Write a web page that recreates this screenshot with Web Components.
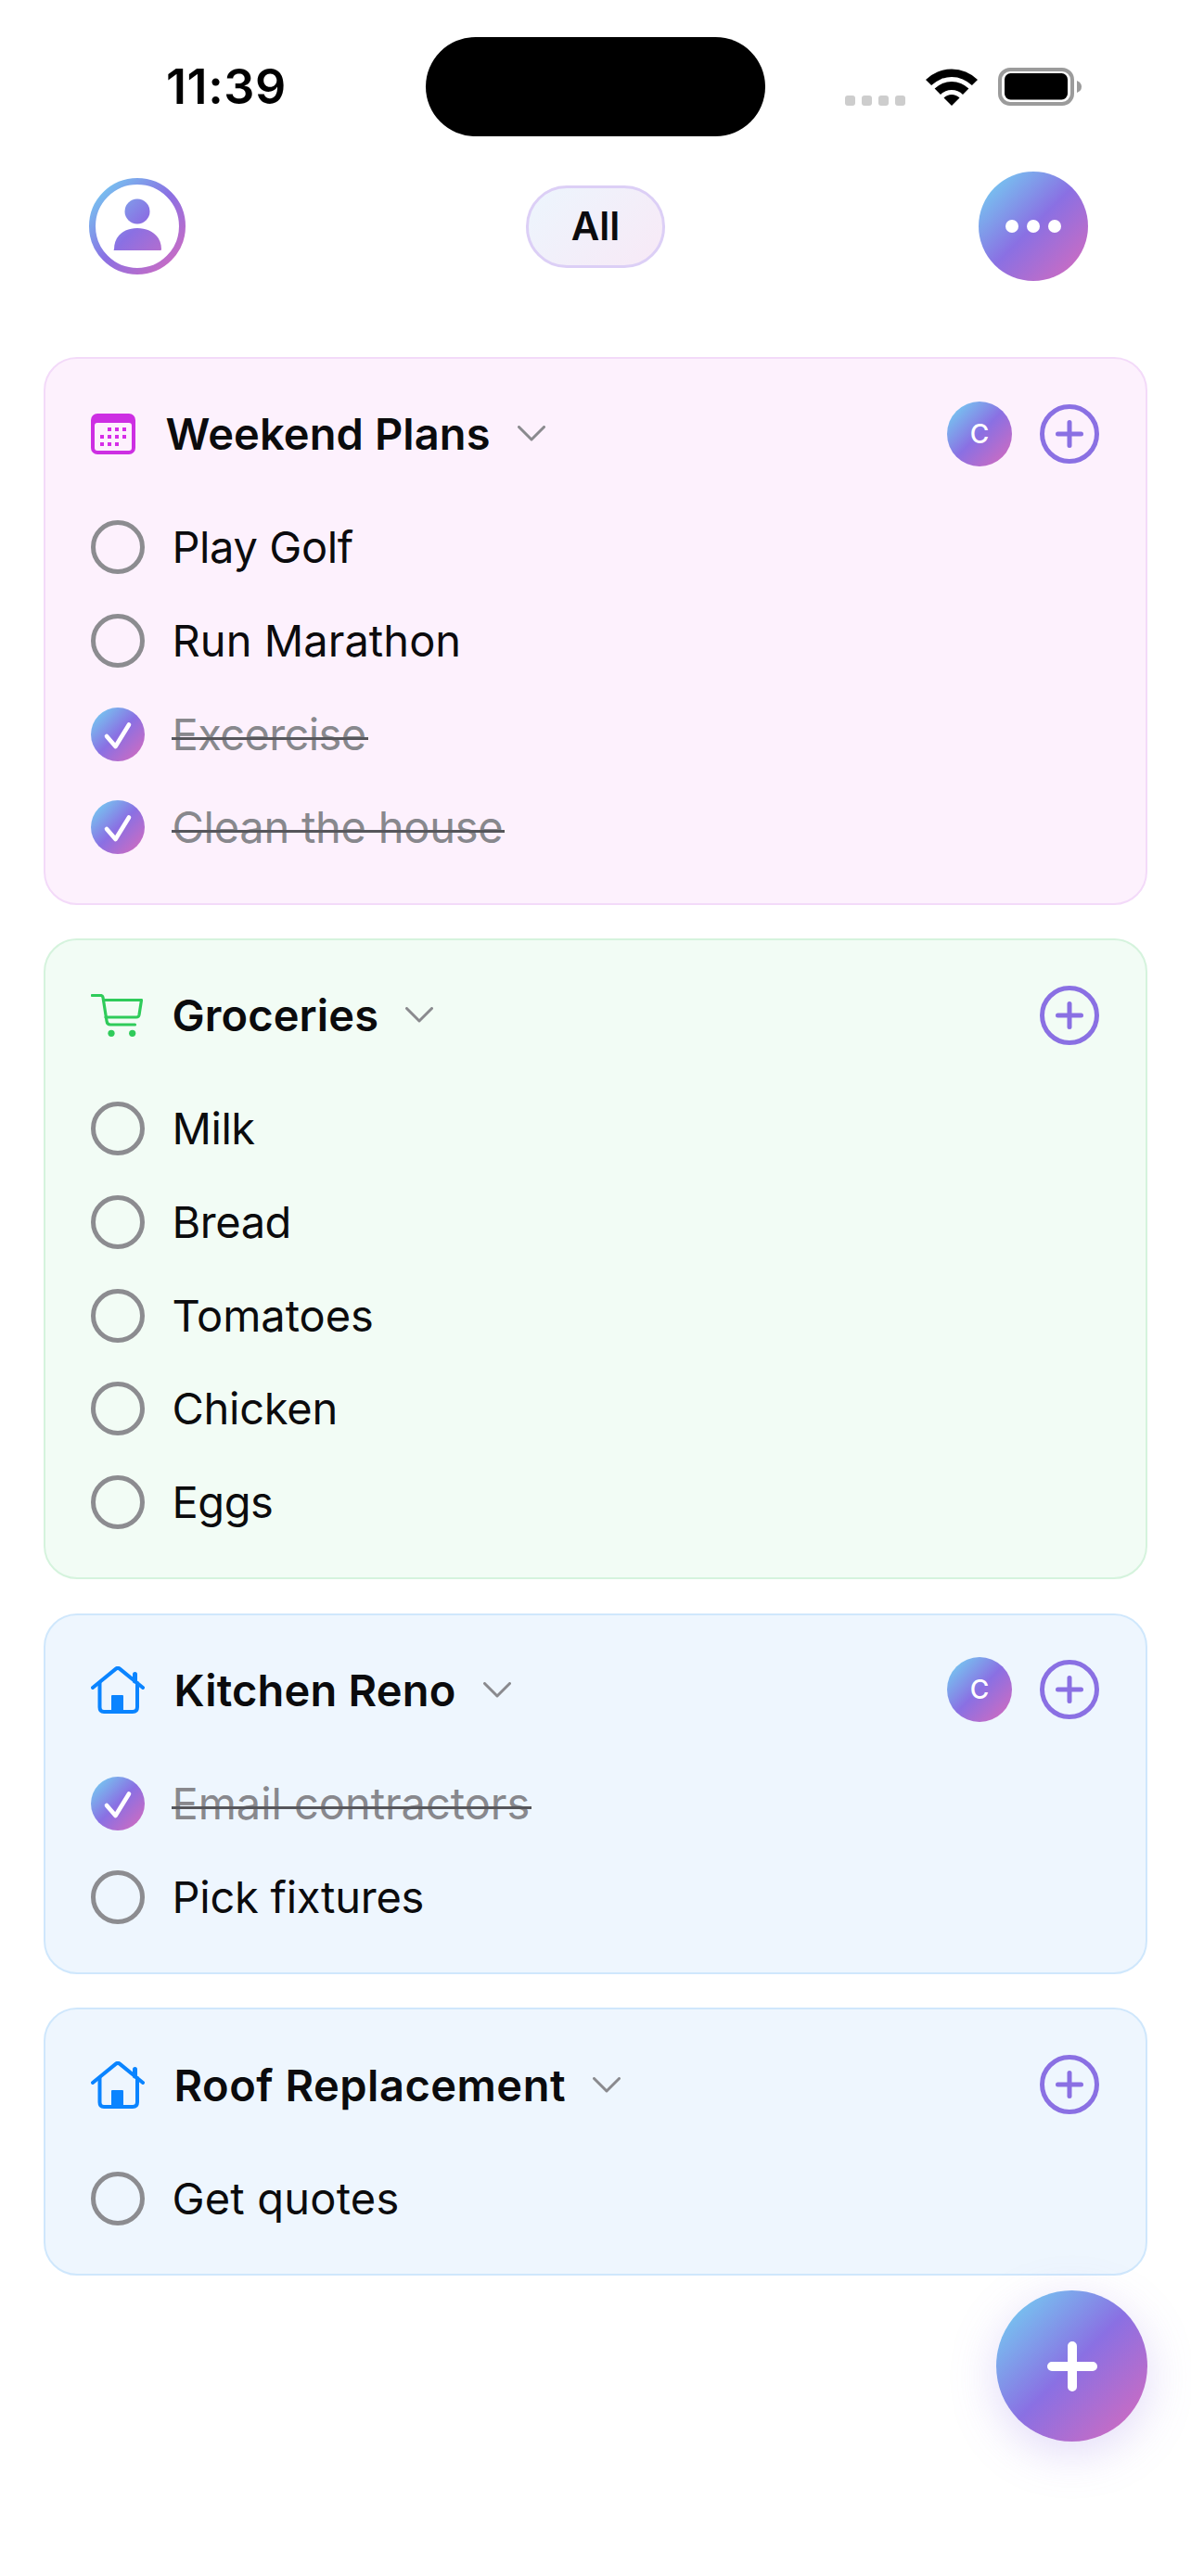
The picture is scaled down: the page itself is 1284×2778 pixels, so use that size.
<!DOCTYPE html>
<html>
<head>
<meta charset="utf-8">
<title>Lists</title>
<style>
    html, body { margin: 0; padding: 0; background: #fff; }
    body { font-family: Inter, "Noto Sans", sans-serif; color: #0b0b0d; }
</style>
</head>
<body>
<todo-page>
    <phone-status></phone-status>
    <app-toolbar></app-toolbar>

    <list-card tone="pink" avatar="C">
        <svg slot="icon" style="margin-right: 1px" width="48" height="44" viewBox="0 0 48 44">
            <rect width="48" height="44" rx="7" fill="#cd2fe3"/>
            <rect x="4" y="10" width="40" height="30" rx="3" fill="#fdf1fd"/>
            <g fill="#d62ee8">
                <rect x="18" y="15" width="4" height="4"/><rect x="26" y="15" width="4" height="4"/><rect x="34" y="15" width="4" height="4"/>
                <rect x="10" y="23" width="4" height="4"/><rect x="18" y="23" width="4" height="4"/><rect x="26" y="23" width="4" height="4"/><rect x="34" y="23" width="4" height="4"/>
                <rect x="10" y="31" width="4" height="4"/><rect x="18" y="31" width="4" height="4"/><rect x="26" y="31" width="4" height="4"/>
            </g>
        </svg>
        <span slot="title" style="letter-spacing: 0.1px">Weekend Plans</span>
        <todo-item style="letter-spacing: -0.4px">Play Golf</todo-item>
        <todo-item style="letter-spacing: 0.05px">Run Marathon</todo-item>
        <todo-item done style="letter-spacing: -0.6px">Excercise</todo-item>
        <todo-item done>Clean the house</todo-item>
    </list-card>

    <list-card tone="green">
        <svg slot="icon" width="56" height="46" viewBox="0 0 56 46" fill="none" stroke="#2fcb5a" stroke-width="3.2" stroke-linecap="round" stroke-linejoin="round">
            <path d="M1.5 1.5H10.5Q12.5 1.5 13 3.5L17 29Q17.5 33 21 33H47.5"/>
            <path d="M13.8 6.5H54.5L52 22.5Q51.5 25 49 25H16"/>
            <circle cx="22" cy="42.3" r="3.6" fill="#2fcb5a" stroke="none"/>
            <circle cx="44.7" cy="42.3" r="3.6" fill="#2fcb5a" stroke="none"/>
        </svg>
        <span slot="title" style="letter-spacing: 0.1px">Groceries</span>
        <todo-item style="letter-spacing: -0.45px">Milk</todo-item>
        <todo-item style="letter-spacing: -0.45px">Bread</todo-item>
        <todo-item style="letter-spacing: -0.05px">Tomatoes</todo-item>
        <todo-item>Chicken</todo-item>
        <todo-item style="letter-spacing: -0.45px">Eggs</todo-item>
    </list-card>

    <list-card tone="blue" avatar="C">
        <svg slot="icon" width="58" height="51" viewBox="0 0 58 51" fill="none" stroke="#0a84ff" stroke-width="4" stroke-linecap="round" stroke-linejoin="round">
            <path d="M2 23L27 2.6Q29 1.2 31 2.6L56 23"/>
            <path d="M47.5 16V8.5" stroke-width="5"/>
            <path d="M9.5 18V44Q9.5 49 14 49H45Q50 49 50 44V18"/>
            <rect x="22" y="31" width="13" height="18" rx="1" fill="#0a84ff" stroke="none"/>
        </svg>
        <span slot="title" style="letter-spacing: 0.2px">Kitchen Reno</span>
        <todo-item done style="letter-spacing: -0.05px">Email contractors</todo-item>
        <todo-item>Pick fixtures</todo-item>
    </list-card>

    <list-card tone="blue">
        <svg slot="icon" width="58" height="51" viewBox="0 0 58 51" fill="none" stroke="#0a84ff" stroke-width="4" stroke-linecap="round" stroke-linejoin="round">
            <path d="M2 23L27 2.6Q29 1.2 31 2.6L56 23"/>
            <path d="M47.5 16V8.5" stroke-width="5"/>
            <path d="M9.5 18V44Q9.5 49 14 49H45Q50 49 50 44V18"/>
            <rect x="22" y="31" width="13" height="18" rx="1" fill="#0a84ff" stroke="none"/>
        </svg>
        <span slot="title" style="letter-spacing: 0.5px">Roof Replacement</span>
        <todo-item style="letter-spacing: 0.2px">Get quotes</todo-item>
    </list-card>

    <add-fab></add-fab>
</todo-page>

<script>
// same three stops everywhere, the svg ones need their own copy per shadow root
const gradientCss = 'linear-gradient(135deg, #78bdef 14%, #8a70e3 50%, #c46cc6 86%)';
const gradientStops = `
    <stop offset="0.14" stop-color="#78bdef"/>
    <stop offset="0.5" stop-color="#8a70e3"/>
    <stop offset="0.86" stop-color="#c46cc6"/>`;

class TodoPage extends HTMLElement {
    constructor() {
        super();
        this.attachShadow({mode: 'open'});
        this.shadowRoot.innerHTML = `
            <style>
                :host { display: block; position: relative; width: 1284px; height: 2778px; overflow: hidden; }
                main { display: flex; flex-direction: column; gap: 36.3px; padding: 0 47px; }
            </style>
            <slot name="top"></slot>
            <main><slot></slot></main>`;
    }
}

class PhoneStatus extends HTMLElement {
    constructor() {
        super();
        this.attachShadow({mode: 'open'});
        this.shadowRoot.innerHTML = `
            <style>
                :host { display: flex; align-items: center; height: 107px; padding: 40px 0 0 179px; }
                .time { width: 280px; font: 600 52px/1 Inter, sans-serif; color: #000; letter-spacing: 0.6px; }
                .island { width: 366px; height: 107px; border-radius: 54px; background: #000; }
                .icons { display: flex; align-items: flex-end; margin-left: 86px; height: 41px; }
                .dots { display: flex; gap: 7px; margin-right: 22px; }
                .dots i { width: 11px; height: 11px; border-radius: 3px; background: #cdcdcd; }
                .wifi { margin-right: 22px; display: block; }
                svg { display: block; }
            </style>
            <div class="time">11:39</div>
            <div class="island"></div>
            <div class="icons">
                <div class="dots"><i></i><i></i><i></i><i></i></div>
                <svg class="wifi" width="56" height="40" viewBox="0 0 56 40">
                    <path d="M0 12A40 40 0 0 1 56 12L49.9 18.1A31 31 0 0 0 6.1 18.1Z"/>
                    <path d="M9.6 21.6A26 26 0 0 1 46.4 21.6L40 28A17 17 0 0 0 16 28Z"/>
                    <path d="M19.5 31.5A12 12 0 0 1 36.5 31.5L28 40Z"/>
                </svg>
                <svg width="91" height="41" viewBox="0 0 91 41">
                    <rect x="2" y="2" width="78" height="37" rx="11" fill="#fff" stroke="#9b9b9b" stroke-width="4"/>
                    <rect x="7" y="6" width="68" height="28.5" rx="6.5"/>
                    <path d="M85 14Q90 16 90 20.5T85 27Z" fill="#9b9b9b"/>
                </svg>
            </div>`;
        this.setAttribute('slot', 'top');
    }
}

class AppToolbar extends HTMLElement {
    constructor() {
        super();
        this.attachShadow({mode: 'open'});
        this.shadowRoot.innerHTML = `
            <style>
                :host { display: grid; grid-template-columns: 1fr auto 1fr; align-items: center; margin: 38px 0 82px; padding: 0 96px; height: 118px; }
                svg { display: block; }
                .pill {
                    display: flex; align-items: center; justify-content: center;
                    box-sizing: border-box; width: 150px; height: 89px; border-radius: 44px;
                    border: 3px solid #dccff6;
                    background: linear-gradient(135deg, #ecf5fd, #f8e9f6);
                    font: 560 42px/1 Inter, sans-serif; color: #0b0b0d;
                }
                .more {
                    justify-self: end; margin-right: 15px;
                    display: flex; align-items: center; justify-content: center; gap: 9px;
                    width: 118px; height: 118px; border-radius: 50%;
                    background: ${gradientCss};
                }
                .more i { width: 14px; height: 14px; border-radius: 50%; background: #fff; }
            </style>
            <svg width="104" height="104" viewBox="0 0 104 104">
                <defs><linearGradient id="g" gradientUnits="userSpaceOnUse" x1="0" y1="0" x2="104" y2="104">${gradientStops}</linearGradient></defs>
                <circle cx="52" cy="52" r="48.5" fill="#fff" stroke="url(#g)" stroke-width="7"/>
                <circle cx="52" cy="36" r="13.5" fill="url(#g)"/>
                <path d="M27 77C27 62 38 54 52 54S78 62 78 77Q78 78 77 78H27Q26 78 27 77Z" fill="url(#g)"/>
            </svg>
            <div class="pill">All</div>
            <div class="more"><i></i><i></i><i></i></div>`;
        this.setAttribute('slot', 'top');
    }
}

const tones = {
    pink: ['#fdf1fd', '#f3daf9'],
    green: ['#f2fcf5', '#d5f3dd'],
    blue: ['#eef6fe', '#cfe7fc']
};

class ListCard extends HTMLElement {
    constructor() {
        super();
        this.attachShadow({mode: 'open'});
    }

    connectedCallback() {
        const tone = tones[this.getAttribute('tone')] || tones.blue;
        const avatar = this.getAttribute('avatar');
        this.shadowRoot.innerHTML = `
            <style>
                :host {
                    display: block; box-sizing: border-box; border-radius: 36px;
                    padding: 45.7px 50px 31px 49px;
                    background: ${tone[0]}; border: 2px solid ${tone[1]};
                }
                header { display: flex; align-items: center; height: 70px; margin-bottom: 37.3px; }
                .icon { display: flex; margin-right: 31.5px; }
                .title { font: 580 47px/1 Inter, sans-serif; color: #0b0b0d; }
                .chevron { display: block; margin-left: 29px; }
                .end { margin-left: auto; display: flex; align-items: center; gap: 30px; }
                .avatar {
                    display: flex; align-items: center; justify-content: center;
                    width: 70px; height: 70px; border-radius: 50%;
                    background: ${gradientCss};
                    font: 500 28px/1 Inter, sans-serif; color: #fff;
                }
                .add { display: block; }
            </style>
            <header>
                <span class="icon"><slot name="icon"></slot></span>
                <span class="title"><slot name="title"></slot></span>
                <svg class="chevron" width="30" height="17" viewBox="0 0 30 17" fill="none" stroke="#8a8a8e" stroke-width="3" stroke-linecap="round" stroke-linejoin="round">
                    <path d="M1.5 1.5L15 15L28.5 1.5"/>
                </svg>
                <span class="end">
                    ${avatar ? `<span class="avatar">${avatar}</span>` : ''}
                    <svg class="add" width="64" height="64" viewBox="0 0 64 64" fill="none" stroke="#8a70e3" stroke-width="5" stroke-linecap="round">
                        <circle cx="32" cy="32" r="29.5"/>
                        <path d="M32 19.5V44.5M19.5 32H44.5"/>
                    </svg>
                </span>
            </header>
            <slot></slot>`;
    }
}

class TodoItem extends HTMLElement {
    constructor() {
        super();
        this.attachShadow({mode: 'open'});
    }

    connectedCallback() {
        const done = this.hasAttribute('done');
        const mark = done
            ? `<svg width="58" height="58" viewBox="0 0 58 58" fill="none">
                   <defs><linearGradient id="g" x1="0" y1="0" x2="1" y2="1">${gradientStops}</linearGradient></defs>
                   <circle cx="29" cy="29" r="29" fill="url(#g)"/>
                   <path d="M17 31L26.5 42L41 18.5" stroke="#fff" stroke-width="4.6" stroke-linecap="round" stroke-linejoin="round"/>
               </svg>`
            : `<svg width="58" height="58" viewBox="0 0 58 58" fill="none">
                   <circle cx="29" cy="29" r="26.5" stroke="#8c8c90" stroke-width="5"/>
               </svg>`;
        this.shadowRoot.innerHTML = `
            <style>
                :host { display: flex; align-items: center; height: 100.7px; letter-spacing: -0.25px; }
                svg { display: block; flex: none; margin-right: 29.5px; }
                .label { position: relative; font: 400 47px/1.2 Inter, sans-serif; color: #0b0b0d; }
                :host([done]) .label { color: #88888d; }
                /* the strike runs a little past the text, text-decoration can't do that */
                :host([done]) .label::after {
                    content: ''; position: absolute; left: -1px; right: -2px; top: 31px; height: 3px;
                    background: #56565b;
                }
            </style>
            ${mark}
            <span class="label"><slot></slot></span>`;
    }
}

class AddFab extends HTMLElement {
    constructor() {
        super();
        this.attachShadow({mode: 'open'});
        this.shadowRoot.innerHTML = `
            <style>
                :host {
                    position: absolute; right: 47px; bottom: 145px;
                    display: flex; align-items: center; justify-content: center;
                    width: 163px; height: 163px; border-radius: 50%;
                    background: ${gradientCss};
                    box-shadow: 0 12px 50px rgba(138, 112, 227, 0.26);
                }
            </style>
            <svg width="54" height="54" viewBox="0 0 54 54" fill="none" stroke="#fff" stroke-width="10" stroke-linecap="round">
                <path d="M27 5V49M5 27H49"/>
            </svg>`;
    }
}

customElements.define('todo-page', TodoPage);
customElements.define('phone-status', PhoneStatus);
customElements.define('app-toolbar', AppToolbar);
customElements.define('list-card', ListCard);
customElements.define('todo-item', TodoItem);
customElements.define('add-fab', AddFab);
</script>
</body>
</html>
